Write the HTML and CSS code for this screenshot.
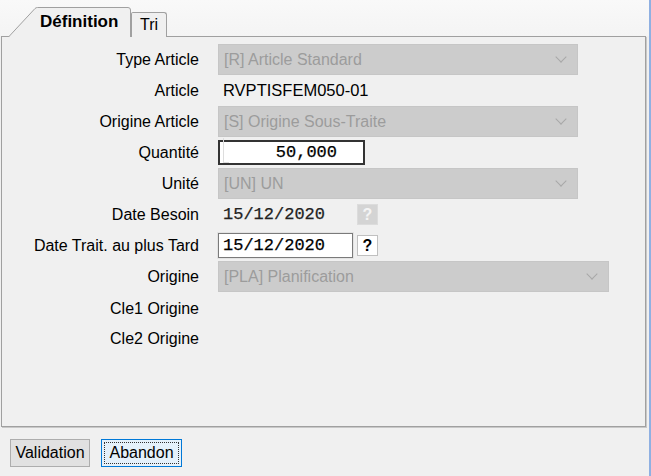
FILE: index.html
```html
<!DOCTYPE html>
<html lang="fr">
<head>
    <meta charset="UTF-8">
    <title>Définition</title>
    <link rel="stylesheet" href="styles.css">
</head>
<body>
    <div class="window">
        <div class="tabs">
            <div class="tab active">
                <svg class="tab-shape" width="123" height="30" viewBox="0 0 123 30">
                    <path d="M0.5 30 L27 1.5 Q28 0.5 29.5 0.5 L120 0.5 Q122.5 0.5 122.5 3 L122.5 30" fill="#f0f0f0" stroke="#a0a0a0"/>
                </svg>
                <span>Définition</span>
            </div>
            <div class="tab">Tri</div>
        </div>

        <div class="panel">
            <div class="form">
                <label>Type Article</label>
                <div class="select"><span>[R] Article Standard</span><i class="chev"></i></div>

                <label>Article</label>
                <div class="value">RVPTISFEM050-01</div>

                <label>Origine Article</label>
                <div class="select"><span>[S] Origine Sous-Traite</span><i class="chev"></i></div>

                <label>Quantité</label>
                <div class="field"><div class="input qty"><span class="caret"></span>50,000</div></div>

                <label>Unité</label>
                <div class="select"><span>[UN] UN</span><i class="chev"></i></div>

                <label>Date Besoin</label>
                <div class="field">
                    <div class="date-text">15/12/2020</div>
                    <div class="help disabled">?</div>
                </div>

                <label>Date Trait. au plus Tard</label>
                <div class="field">
                    <div class="input date">15/12/2020</div>
                    <div class="help">?</div>
                </div>

                <label>Origine</label>
                <div class="select wide"><span>[PLA] Planification</span><i class="chev"></i></div>

                <label class="low">Cle1 Origine</label>
                <div></div>

                <label>Cle2 Origine</label>
                <div></div>
            </div>
        </div>

        <div class="footer">
            <button class="btn">Validation</button>
            <button class="btn focused"><span>Abandon</span></button>
        </div>
    </div>
</body>
</html>
```

FILE: styles.css
```css
body {
    margin: 0;
    background: #f0f0f0;
    font-family: "Liberation Sans", Arial, sans-serif;
    font-size: 16px;
    color: #000;
}
.window {
    width: 649px;
    height: 476px;
    border-right: 2px solid #8fb0e2;
    display: flex;
    flex-direction: column;
}
.tabs {
    flex-shrink: 0;
    height: 36px;
    background: linear-gradient(#f9f9f9, #f4f4f4);
    display: flex;
    align-items: flex-end;
    padding-left: 8px;
}
.tab {
    position: relative;
    height: 24px;
    padding: 0 8px;
    margin-bottom: -1px;
    border: 1px solid #a0a0a0;
    border-bottom: none;
    border-radius: 2px 3px 0 0;
    background: #f0f0f0;
    display: flex;
    align-items: center;
    font-size: 16px;
}
.tab.active {
    width: 123px;
    height: 30px;
    padding: 0;
    border: none;
    background: none;
    z-index: 1;
}
.tab-shape {
    position: absolute;
    left: 0;
    top: 0;
}
.tab.active span {
    position: relative;
    margin-left: 32px;
    font-size: 17px;
    font-weight: bold;
}
.panel {
    flex-shrink: 0;
    margin-left: 1px;
    width: 643px;
    height: 389px;
    border: 1px solid #a0a0a0;
    box-shadow: 1px 1px 0 #c8c8c8;
    background: #f0f0f0;
}
.form {
    padding-top: 7px;
    display: grid;
    grid-template-columns: 197px 1fr;
    grid-auto-rows: 31px;
    column-gap: 19px;
    align-items: center;
}
.form label {
    text-align: right;
}
.form label.low {
    margin-top: 3px;
}
.select {
    width: 360px;
    height: 31px;
    box-sizing: border-box;
    border: 1px solid #c6c6c6;
    background: #cccccc;
    color: #9c9c9c;
    display: flex;
    align-items: center;
    justify-content: space-between;
    padding: 0 12px 0 5px;
}
.select.wide {
    width: 391px;
}
.chev {
    width: 7px;
    height: 7px;
    border-right: 1px solid #a8a8a8;
    border-bottom: 1px solid #a8a8a8;
    transform: rotate(45deg);
    margin-top: -5px;
}
.value {
    padding-left: 5px;
    font-size: 16.5px;
}
.field {
    display: flex;
    align-items: center;
    gap: 4px;
}
.input {
    height: 25px;
    box-sizing: border-box;
    border: 1px solid #7a7a7a;
    outline: 1px solid #e3e3e3;
    background: #fff;
    font-family: "Liberation Mono", "Courier New", monospace;
    font-size: 17px;
    -webkit-text-stroke: 0.25px #000;
    display: flex;
    align-items: center;
}
.input.qty {
    position: relative;
    width: 147px;
    border: 2px solid #333;
    outline: none;
    justify-content: flex-end;
    padding-right: 26px;
}
.caret {
    position: absolute;
    left: 3px;
    top: -4px;
    width: 5px;
    height: 24px;
    border-left: 1px solid #ddd;
    border-bottom: 1px solid #ddd;
}
.input.date {
    width: 135px;
    padding-left: 4px;
}
.date-text {
    width: 135px;
    padding-left: 5px;
    box-sizing: border-box;
    font-family: "Liberation Mono", "Courier New", monospace;
    font-size: 17px;
    -webkit-text-stroke: 0.25px #222;
    color: #222;
}
.help {
    width: 21px;
    height: 21px;
    box-sizing: border-box;
    border: 1px solid #c0c0c0;
    background: #fff;
    font-weight: bold;
    font-size: 16px;
    display: flex;
    align-items: center;
    justify-content: center;
}
.help.disabled {
    background: #d4d4d4;
    border-color: #dcdcdc;
    color: #f4f4f4;
}
.footer {
    display: flex;
    gap: 11px;
    padding: 12px 10px;
}
.btn {
    height: 28px;
    width: 80px;
    padding: 0;
    border: 1px solid #adadad;
    background: #e1e1e1;
    font-family: inherit;
    font-size: 16px;
    color: #000;
}
.btn.focused {
    width: 81px;
    border-color: #0078d7;
    background: #e5f1fb;
    padding: 2px;
}
.btn.focused span {
    display: block;
    height: 100%;
    box-sizing: border-box;
    border: 1px dotted #333;
    line-height: 20px;
}
```
